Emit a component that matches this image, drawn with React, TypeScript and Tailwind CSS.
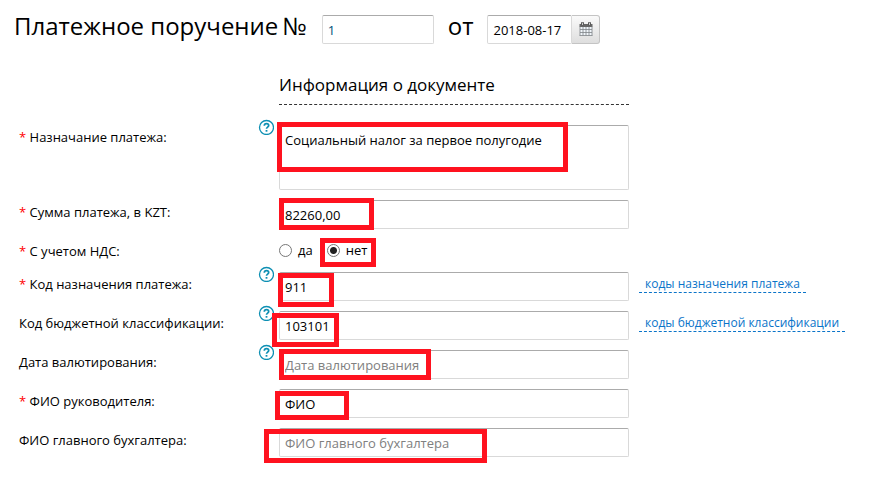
import React, { useState } from 'react';

interface FieldRowProps {
  id: string;
  label: string;
  required?: boolean;
  help?: boolean;
  link?: string;
  markClass: string;
  children: React.ReactNode;
}

const boxClass =
  'block w-full border border-[#d9d9d9] border-t-[#ababab] bg-white px-[5px] text-[13px] leading-5 placeholder:text-[#808080] placeholder:opacity-100 outline-none';
const inputClass = `${boxClass} h-[29px] rounded-[2px] pt-px`;

const HelpButton = () => (
  <button type="button" aria-label="Справка" className="absolute -left-[21px] -top-[6px] size-4">
    <svg viewBox="0 0 16 16" className="size-4" fill="none" stroke="#0d8fb3">
      <circle cx="8.5" cy="8.5" r="7" strokeWidth="1.3" fill="#fff" />
      <path d="M6.3 6.8c0-1.4.9-2.1 2.2-2.1s2.2.7 2.2 1.9c0 1.5-2.2 1.6-2.2 3.2" strokeWidth="1.7" />
      <path d="M8.5 11v1.7" strokeWidth="1.8" />
    </svg>
  </button>
);

const CalendarIcon = () => (
  <svg viewBox="0 0 14 14" className="size-[14px]" fill="none">
    <path d="M1 2h12v11.5H1z" fill="#f1f6fa" />
    <path d="M.5 2h13v3H.5z" fill="#666" />
    <path d="M1 4.5v9M4 5v8.5M7 5v8.5M10 5v8.5M13 4.5v9M1 7.5h12M1 10.5h12M.5 13.5h13" stroke="#7f8488" strokeWidth=".8" />
    <path d="M3.5.3v3M10.5.3v3" stroke="#5a5a5a" strokeWidth="3" />
    <path d="M3.5 1v2M10.5 1v2" stroke="#ccc" />
  </svg>
);

// Red frame that marks the part of the field to fill in
const Mark = ({ className }: { className: string }) => (
  <span className={`pointer-events-none absolute border-5 border-[#ff121f] ${className}`} />
);

const Star = () => <span className="text-[#f00]">* </span>;

const FieldRow: React.FC<FieldRowProps> = ({ id, label, required, help, link, markClass, children }) => (
  <>
    <label htmlFor={id} className="leading-6">
      {required && <Star />}
      {label}
    </label>
    <div className="relative">
      {help && <HelpButton />}
      {children}
      <Mark className={markClass} />
    </div>
    <div>
      {link && (
        <a
          href="#"
          className="inline-block border-b border-dashed border-[#0a74c9] px-[6px] pt-1 text-[12px] leading-4 text-[#0a74c9]"
        >
          {link}
        </a>
      )}
    </div>
  </>
);

const App = () => {
  const [vat, setVat] = useState('no');

  const radio = (value: string, text: string) => (
    <label className="flex items-center gap-[6px]">
      <input
        type="radio"
        name="vat"
        value={value}
        checked={vat === value}
        onChange={() => setVat(value)}
        className="size-[13px] appearance-none rounded-full border border-[#777] bg-white checked:bg-[radial-gradient(circle,#222_3px,#fff_4px)]"
      />
      <span className="pb-[2px] leading-5">{text}</span>
    </label>
  );

  return (
    <form className="bg-white px-[14px] pb-6 pt-[15px] font-['Open_Sans','Noto_Sans',sans-serif] text-[13px] text-black">
      <header className="flex h-[29px] text-[24px] leading-[22px]">
        <h1 className="mr-[15px] whitespace-nowrap">
          <label htmlFor="number" className="flex gap-1">
            <span>Платежное поручение</span>
            <span>№</span>
          </label>
        </h1>
        <input id="number" defaultValue="1" className={`${inputClass} max-w-[112px] text-[#00507a]`} />
        <label htmlFor="date" className="mx-[14px]">от</label>
        <div className="flex">
          <input
            id="date"
            defaultValue="2018-08-17"
            className={`${inputClass} max-w-[85px]`}
          />
          <button
            type="button"
            aria-label="Выбрать дату"
            className="flex h-[29px] w-7 shrink-0 items-center justify-center rounded-r-[3px] border border-l-0 border-[#c4c4c4] bg-linear-to-b from-[#fafafa] to-[#dedede] pb-[2px]"
          >
            <CalendarIcon />
          </button>
        </div>
      </header>

      <div className="mt-[29px] grid grid-cols-[250px_minmax(0,350px)_auto] gap-[10px] pl-[5px]">
        <h2 className="col-start-2 mb-[10px] border-b border-dashed border-[#333] pb-[7px] text-[17px] leading-6">
          Информация о документе
        </h2>
        <div />

        <FieldRow id="purpose" label="Назначание платежа:" required help markClass="-left-[2px] -top-[3px] h-[50px] w-[291px]">
          <textarea
            id="purpose"
            defaultValue="Социальный налог за первое полугодие"
            className={`${boxClass} h-[65px] resize-none rounded-[2px] pt-1`}
          />
        </FieldRow>

        <FieldRow id="sum" label="Сумма платежа, в KZT:" required markClass="left-0 -top-[2px] h-8 w-[95px]">
          <input id="sum" defaultValue="82260,00" className={inputClass} />
        </FieldRow>

        <div id="vat-label" className="h-[23px] leading-6">
          <Star />С учетом НДС:
        </div>
        <div role="radiogroup" aria-labelledby="vat-label" className="relative flex h-[23px] items-center gap-[14px]">
          {radio('yes', 'да')}
          {radio('no', 'нет')}
          <Mark className="left-[41px] -top-px h-[29px] w-14" />
        </div>
        <div />

        <FieldRow
          id="code"
          label="Код назначения платежа:"
          required
          help
          link="коды назначения платежа"
          markClass="-left-px top-px h-[34px] w-14"
        >
          <input id="code" defaultValue="911" className={inputClass} />
        </FieldRow>

        <FieldRow
          id="budget"
          label="Код бюджетной классификации:"
          help
          link="коды бюджетной классификации"
          markClass="-left-[7px] top-[2px] h-[34px] w-[67px]"
        >
          <input id="budget" defaultValue="103101" className={inputClass} />
        </FieldRow>

        <FieldRow id="valuation" label="Дата валютирования:" help markClass="left-0 -top-px h-[31px] w-[152px]">
          <input id="valuation" placeholder="Дата валютирования" className={inputClass} />
        </FieldRow>

        <FieldRow id="head" label="ФИО руководителя:" required markClass="-left-1 top-[2px] h-[29px] w-[74px]">
          <input id="head" defaultValue="ФИО" className={inputClass} />
        </FieldRow>

        <FieldRow id="accountant" label="ФИО главного бухгалтера:" markClass="-left-[15px] top-px h-[34px] w-[223px]">
          <input id="accountant" placeholder="ФИО главного бухгалтера" className={inputClass} />
        </FieldRow>
      </div>
    </form>
  );
};

export default App;
